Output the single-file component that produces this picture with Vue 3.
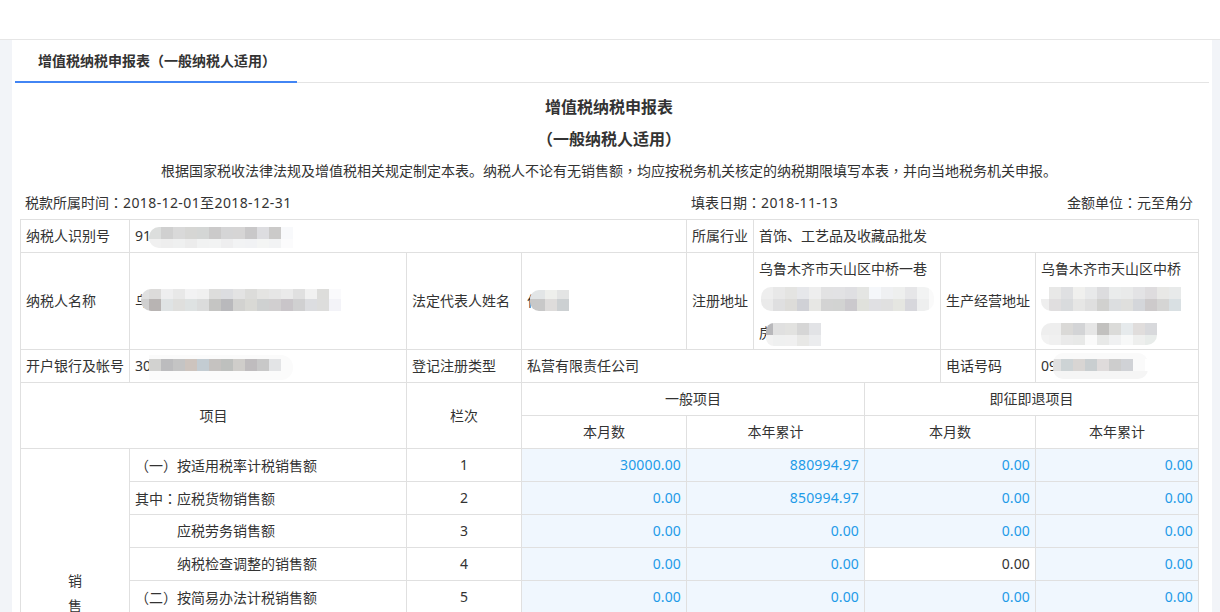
<script setup>
import {h} from "vue";

// mosaic patches that hide private data, colours read from the screenshot
const masks = {
  id: {left: 19, top: 7, radius: "10px 0 0 10px", h: [12, 9], rows: [
    ["#dcdedd", "#d0d0d0", "#d9d9d9", "#d6d6d4", "#d4d6d5", "#cbcaca", "#d5d5d6", "#d6d5d5", "#c9c8c9", "#dddde0", "#cbcac9", "#f8f9fb"],
    ["#f0f0f0", "#eeeeee", "#eff0f0", "#ececec", "#f1f2f2", "#f2f3f3", "#eeeeef", "#f2f3f4", "#f1f2f4", "#f4f5f4", "#f2f3f4", "#fbfbfc"]
  ]},
  name: {left: 11, top: 36, off: 4, radius: "10px 0 0 10px", h: [10, 12], rows: [
    ["#e0e0e0", "#dcdbda", "#eeeeef", "#e8e8e8", "#f2f2f3", "#f0f0f0", "#dddddc", "#dcdde0", "#e3e3e3", "#dcdcda", "#e4e4e2", "#e6e6e6", "#eaeaea", "#e0e0e0", "#f1f1f1", "#dddddb", "#fafafc"],
    ["#d0d0d0", "#b8b4b3", "#dfe3e4", "#dfdfdd", "#dee2e2", "#dbdcdc", "#c5c5c3", "#b9b9bc", "#d2d2d0", "#d9d9d5", "#cfd1d1", "#d1cfd0", "#c9c5c9", "#d0d0d1", "#dcdde0", "#dddddc", "#f3f3f8"]
  ]},
  legal: {left: 8, top: 37, off: 9, radius: "9px 0 0 9px", h: [9, 12], rows: [
    ["#e2e5e6", "#e2e5e6", "#eeefec", "#e3e4e4"],
    ["#c8c8c8", "#c8c8c8", "#dedcdb", "#ccd0d2"]
  ]},
  addr2: {left: 7, top: 34, w: 173, radius: "10px", h: [12, 12], rows: [
    ["#eeeeee", "#e8e8e8", "#e4e4e2", "#e6e7ea", "#eeeeee", "#e2e2e3", "#e2e2e4", "#dfdfe2", "#e4e5e3", "#f5f7fa", "#eff0f2", "#eeefee", "#e6e6e8", "#f2f3f3", "#fafafa"],
    ["#eaeaea", "#dfdfe0", "#dddcd9", "#d0d1d6", "#e7e7e4", "#d3d3d3", "#d2d3d2", "#cbc9cd", "#e0e1dc", "#e0e0e3", "#e0e0e0", "#e5e6e1", "#d7d7dc", "#eeefef", "#fafafa"]
  ]},
  addr3: {left: 12, top: 70, off: 5, radius: "8px 0 0 8px", h: [12, 11], rows: [
    ["#b8b8bb", "#e0e0e0", "#e2e2e0", "#d6d6d6", "#e2e3e6"],
    ["#f2f2f2", "#eff0f0", "#f0f0f0", "#e8e8e6", "#ebecee"]
  ]},
  op2: {left: 5, top: 34, off: 4, radius: "0 0 0 10px", h: [12, 12], rows: [
    ["#ffffff", "#e8e8e7", "#dfe0e2", "#f0f0ee", "#e8e9ea", "#dcdcde", "#eaecec", "#e9eaea", "#e3e3e5", "#dedcde", "#e8e8e6", "#e8eaea"],
    ["#eeeeee", "#e0dedf", "#d9dbdd", "#e6e6e5", "#dfdfdf", "#d1d1cf", "#dcdee0", "#dfdfdd", "#d4d6da", "#cdcacb", "#d5d5d4", "#d9e0e3"]
  ]},
  op3: {left: 5, top: 70, off: 4, radius: "10px 0 10px 10px", h: [12, 10], rows: [
    ["#eeeeee", "#eeeeee", "#dad9d7", "#d3d4d6", "#e6e6e6", "#c2c1bf", "#dbdbd9", "#e6eaec", "#e0dddc", "#d8d9dc"],
    ["#f2f2f2", "#f0f0f0", "#eaeaea", "#e8e9e8", "#fafafa", "#e8e9e8", "#f0f1f2", "#f7f8f8", "#eeefee", "#e8ecea"]
  ]},
  account: {left: 19, top: 5, w: 144, radius: "0 12px 12px 0", h: [4, 12, 9], rows: [
    ["#fbfbfb"],
    ["#d2d2d0", "#bcbcbe", "#c4c4c4", "#cdc4be", "#c3ccd2", "#c5c2c0", "#bec0be", "#cfcdca", "#bfbcbe", "#c8c8c8", "#e3e4e6", "#fbfbfb"],
    ["#fbfbfb"]
  ]},
  phone: {left: 17, top: 3, off: 4, w: 95, radius: "10px", h: [6, 12, 8], rows: [
    ["#fafafa"],
    ["#e0e0e0", "#cdd3d5", "#d8d5d3", "#c9ced0", "#dfdbdb", "#cdcdcd", "#d0d2d6", "#fafafa"],
    ["#f5f5f5"]
  ]}
};

const Blur = (props) => {
  const d = props.d;
  const off = d.off || 0;
  const cols = Math.max(...d.rows.map(r => r.length));
  const width = d.w || cols * 12 - off;
  const height = d.h.reduce((a, b) => a + b, 0);
  const rects = [];
  let y = 0;
  d.rows.forEach((row, j) => {
    row.forEach((fill, i) => {
      rects.push(h("rect", {
        x: i * 12 - off,
        y,
        width: row.length === 1 ? width + 12 : 12,
        height: d.h[j],
        fill
      }));
    });
    y += d.h[j];
  });
  return h("svg", {
    class: "blur",
    width,
    height,
    style: {left: d.left + "px", top: d.top + "px", borderRadius: d.radius}
  }, rects);
};
Blur.props = ["d"];

const rows = [
  {no: "一", name: "按适用税率计税销售额", vals: ["30000.00", "880994.97", "0.00", "0.00"]},
  {sub: true, name: "应税货物销售额", vals: ["0.00", "850994.97", "0.00", "0.00"]},
  {name: "应税劳务销售额", vals: ["0.00", "0.00", "0.00", "0.00"]},
  {name: "纳税检查调整的销售额", vals: ["0.00", "0.00", "0.00", "0.00"], plain: 2},
  {no: "二", name: "按简易办法计税销售额", vals: ["0.00", "0.00", "0.00", "0.00"]}
];
</script>

<template>
  <div class="page">
    <div class="top-bar"></div>
    <div class="panel">
      <div class="tabs">
        <div class="tab">增值税纳税申报表<span class="pn">&#xFF08;</span>一般纳税人适用<span class="pn">&#xFF09;</span></div>
      </div>
      <div class="content">
        <h1 class="title">增值税纳税申报表</h1>
        <h2 class="title sub"><span class="pn">&#xFF08;</span>一般纳税人适用<span class="pn">&#xFF09;</span></h2>
        <p class="desc">根据国家税收法律法规及增值税相关规定制定本表。纳税人不论有无销售额<span class="pn">&#xFF0C;</span>均应按税务机关核定的纳税期限填写本表<span class="pn">&#xFF0C;</span>并向当地税务机关申报。</p>
        <div class="info">
          <span class="info-left">税款所属时间<span class="pn">&#xFF1A;</span><span class="date">2018-12-01至2018-12-31</span></span>
          <span class="info-mid">填表日期<span class="pn">&#xFF1A;</span><span class="date">2018-11-13</span></span>
          <span>金额单位<span class="pn">&#xFF1A;</span>元至角分</span>
        </div>
        <table class="report">
          <colgroup>
            <col style="width: 109px">
            <col style="width: 277px">
            <col style="width: 115px">
            <col style="width: 165px">
            <col style="width: 67px">
            <col style="width: 111px">
            <col style="width: 76px">
            <col style="width: 95px">
            <col style="width: 163px">
          </colgroup>
          <tbody>
            <tr>
              <td>纳税人识别号</td>
              <td colspan="3" class="masked">91<Blur :d="masks.id" /></td>
              <td>所属行业</td>
              <td colspan="4">首饰、工艺品及收藏品批发</td>
            </tr>
            <tr class="tall">
              <td>纳税人名称</td>
              <td class="masked">乌<Blur :d="masks.name" /></td>
              <td>法定代表人姓名</td>
              <td class="masked">何<Blur :d="masks.legal" /></td>
              <td>注册地址</td>
              <td colspan="2" class="masked addr">乌鲁木齐市天山区中桥一巷<br><br>房<Blur :d="masks.addr2" /><Blur :d="masks.addr3" /></td>
              <td>生产经营地址</td>
              <td class="masked addr">乌鲁木齐市天山区中桥<Blur :d="masks.op2" /><Blur :d="masks.op3" /></td>
            </tr>
            <tr>
              <td>开户银行及帐号</td>
              <td class="masked">30<Blur :d="masks.account" /></td>
              <td>登记注册类型</td>
              <td colspan="4">私营有限责任公司</td>
              <td>电话号码</td>
              <td class="masked">09<Blur :d="masks.phone" /></td>
            </tr>
            <tr>
              <td colspan="2" rowspan="2" class="center">项目</td>
              <td rowspan="2" class="center">栏次</td>
              <td colspan="3" class="center">一般项目</td>
              <td colspan="3" class="center">即征即退项目</td>
            </tr>
            <tr>
              <td class="center">本月数</td>
              <td colspan="2" class="center">本年累计</td>
              <td colspan="2" class="center">本月数</td>
              <td class="center">本年累计</td>
            </tr>
            <tr v-for="(row, i) in rows" :key="i">
              <td v-if="i === 0" rowspan="5" class="center group">
                <div class="group-label">销<br>售</div>
              </td>
              <td class="item">
                <span class="pre">
                  <template v-if="row.no"><span class="pn">&#xFF08;</span>{{ row.no }}<span class="pn">&#xFF09;</span></template>
                  <template v-else-if="row.sub">其中<span class="pn">&#xFF1A;</span></template>
                </span>{{ row.name }}
              </td>
              <td class="center">{{ i + 1 }}</td>
              <td class="num"
                  :class="{plain: row.plain === 0}">{{ row.vals[0] }}</td>
              <td colspan="2" class="num"
                  :class="{plain: row.plain === 1}">{{ row.vals[1] }}</td>
              <td colspan="2" class="num"
                  :class="{plain: row.plain === 2}">{{ row.vals[2] }}</td>
              <td class="num"
                  :class="{plain: row.plain === 3}">{{ row.vals[3] }}</td>
            </tr>
          </tbody>
        </table>
      </div>
    </div>
  </div>
</template>

<style>
html, body {
  margin: 0;
  background: #f2f4f8;
}
</style>

<style scoped>
.page {
  height: 612px;
  overflow: hidden;
  box-sizing: border-box;
  padding: 0 8px 0 12px;
  font-family: "Noto Sans", "Noto Sans CJK SC", sans-serif;
  font-size: 14px;
  color: #333;
  position: relative;
}

.top-bar {
  height: 39px;
  margin: 0 -8px 0 -12px;
  background: #fff;
  border-bottom: 1px solid #e6e6e6;
}

.panel {
  background: #fff;
  padding: 0 3px;
}

.pn {
  font-family: "Noto Sans CJK TC", sans-serif;
}

.date {
  letter-spacing: 0.4px;
}

.tabs {
  height: 42px;
  border-bottom: 1px solid #e4e4e4;
}

.tab {
  width: 282px;
  height: 43px;
  box-sizing: border-box;
  padding-left: 23px;
  line-height: 40px;
  font-weight: bold;
  border-bottom: 2px solid #4285f4;
}

.content {
  padding: 0 5px;
}

.title {
  margin: 0;
  width: 1178px;
  height: 36px;
  box-sizing: border-box;
  padding-top: 12px;
  font-size: 16px;
  line-height: 24px;
  font-weight: bold;
  text-align: center;
}

.title.sub {
  height: 32px;
  padding-top: 7px;
}

.desc {
  margin: 0;
  width: 1178px;
  height: 32px;
  box-sizing: border-box;
  padding-top: 7px;
  line-height: 24px;
  text-align: center;
}

.info {
  display: flex;
  width: 1178px;
  box-sizing: border-box;
  padding: 7px 5px 0;
  height: 36px;
  line-height: 24px;
}

.info-left {
  width: 666px;
}

.info-mid {
  flex: 1;
}

.report {
  width: 1178px;
  table-layout: fixed;
  border-collapse: collapse;
}

.report td {
  height: 33px;
  box-sizing: border-box;
  padding: 0 5px;
  border: 1px solid #e0e0e0;
  line-height: 24px;
  white-space: nowrap;
}

.report .tall td {
  height: 97px;
}

.report .addr {
  line-height: 32px;
  vertical-align: top;
}

.masked {
  position: relative;
}

.blur {
  position: absolute;
}

.center {
  text-align: center;
}

.report .group {
  vertical-align: top;
  padding-top: 119px;
}

.group-label {
  height: 44px;
  line-height: 25px;
}

.pre {
  display: inline-block;
  width: 42px;
}

.report .num {
  text-align: right;
  letter-spacing: 0.15px;
  color: #1e9be8;
  background: #f0f7fe;
}

.report .num.plain {
  color: #333;
  background: #fff;
}
</style>
